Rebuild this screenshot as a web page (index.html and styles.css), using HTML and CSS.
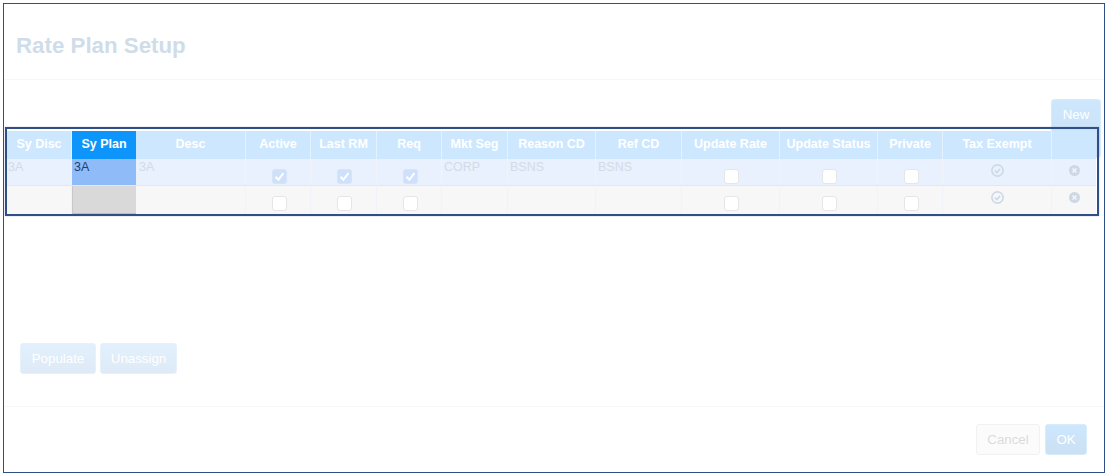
FILE: index.html
```html
<!DOCTYPE html>
<html lang="en">
<head>
<meta charset="utf-8">
<title>Rate Plan Setup</title>
<link rel="stylesheet" href="styles.css">
</head>
<body>
<div class="dialog">
  <header class="dialog-head"><h1 class="title">Rate Plan Setup</h1></header>
  <main class="dialog-body">
    <div class="toolbar"><button class="btn btn-new">New</button></div>
    <div class="grid">
      <div class="row row-head">
        <div class="th">Sy Disc</div>
        <div class="th th-active">Sy Plan</div>
        <div class="th">Desc</div>
        <div class="th">Active</div>
        <div class="th">Last RM</div>
        <div class="th">Req</div>
        <div class="th">Mkt Seg</div>
        <div class="th">Reason CD</div>
        <div class="th">Ref CD</div>
        <div class="th">Update Rate</div>
        <div class="th">Update Status</div>
        <div class="th">Private</div>
        <div class="th">Tax Exempt</div>
        <div class="th"></div>
      </div>
      <div class="row row-a">
        <div class="td td-first">3A</div>
        <div class="td td-plan-a">3A</div>
        <div class="td td-desc">3A</div>
        <div class="td td-box"><span class="check checked"><svg viewBox="0 0 15 15"><path d="M3.6 7.8l2.8 3 5-6.6" fill="none" stroke="#fff" stroke-width="2"/></svg></span></div>
        <div class="td td-box"><span class="check checked"><svg viewBox="0 0 15 15"><path d="M3.6 7.8l2.8 3 5-6.6" fill="none" stroke="#fff" stroke-width="2"/></svg></span></div>
        <div class="td td-box"><span class="check checked"><svg viewBox="0 0 15 15"><path d="M3.6 7.8l2.8 3 5-6.6" fill="none" stroke="#fff" stroke-width="2"/></svg></span></div>
        <div class="td">CORP</div>
        <div class="td">BSNS</div>
        <div class="td">BSNS</div>
        <div class="td td-box"><span class="check"></span></div>
        <div class="td td-box"><span class="check"></span></div>
        <div class="td td-box"><span class="check"></span></div>
        <div class="td td-icon"><svg class="ico-ok" viewBox="0 0 12 12"><circle cx="6" cy="6" r="5.2" fill="none" stroke="#cdd9e7" stroke-width="1.5"/><path d="M3.6 6.1l1.8 1.8 3-3.4" fill="none" stroke="#cdd9e7" stroke-width="1.4"/></svg></div>
        <div class="td td-icon"><svg class="ico-x" viewBox="0 0 10 10"><circle cx="5" cy="5" r="5" fill="#ced8e4"/><path d="M3.2 3.2l3.6 3.6M6.8 3.2l-3.6 3.6" stroke="#f2f5fa" stroke-width="1.4"/></svg></div>
      </div>
      <div class="row row-b">
        <div class="td td-first"></div>
        <div class="td td-plan-b"></div>
        <div class="td"></div>
        <div class="td td-box"><span class="check"></span></div>
        <div class="td td-box"><span class="check"></span></div>
        <div class="td td-box"><span class="check"></span></div>
        <div class="td"></div>
        <div class="td"></div>
        <div class="td"></div>
        <div class="td td-box"><span class="check"></span></div>
        <div class="td td-box"><span class="check"></span></div>
        <div class="td td-box"><span class="check"></span></div>
        <div class="td td-icon"><svg class="ico-ok" viewBox="0 0 12 12"><circle cx="6" cy="6" r="5.2" fill="none" stroke="#cdd9e7" stroke-width="1.5"/><path d="M3.6 6.1l1.8 1.8 3-3.4" fill="none" stroke="#cdd9e7" stroke-width="1.4"/></svg></div>
        <div class="td td-icon"><svg class="ico-x" viewBox="0 0 10 10"><circle cx="5" cy="5" r="5" fill="#ced8e4"/><path d="M3.2 3.2l3.6 3.6M6.8 3.2l-3.6 3.6" stroke="#f2f5fa" stroke-width="1.4"/></svg></div>
      </div>
      <div class="highlight"></div>
    </div>
    <div class="actions">
      <button class="btn btn-soft">Populate</button>
      <button class="btn btn-soft">Unassign</button>
    </div>
  </main>
  <footer class="dialog-foot">
    <button class="btn btn-cancel">Cancel</button>
    <button class="btn btn-ok">OK</button>
  </footer>
</div>
</body>
</html>
```
FILE: styles.css
```css
* { box-sizing: border-box; }
html, body { margin: 0; height: 100%; background: #fff; }
body { font-family: "Liberation Sans", Arial, sans-serif; font-size: 12.5px; padding: 3px 4px 3px 3px; overflow: hidden; }
.dialog { height: 470px; border: 1px solid #2f4f86; display: flex; flex-direction: column; background: #fff; }
.dialog-head { height: 76px; border-bottom: 1px solid #f6f7f8; display: flex; align-items: center; padding: 8px 0 0 12px; }
.title { margin: 0; font-size: 22.3px; font-weight: 700; line-height: 24px; color: #cfdde9; }
.dialog-body { height: 327px; border-bottom: 1px solid #f6f7f8; padding: 19px 0 0 3px; display: flex; flex-direction: column; }
.toolbar { display: flex; justify-content: flex-end; padding-right: 3px; margin-bottom: -27px; }
.btn { font-family: inherit; font-size: 13.3px; border-radius: 3px; padding: 0; color: #fff; }
.btn-new { width: 50px; height: 59px; padding-bottom: 29px; background: linear-gradient(#cde7fd, #cbe0f3); border: 1px solid #d8ebfb; }
.grid { position: relative; width: 1089px; }
.row { position: relative; display: grid; grid-template-columns: 65px 64px 110px 65px 66px 65px 66px 88px 86px 98px 98px 65px 109px 44px; }
.row-head { height: 27.5px; background: #cde8fe; }
.th { display: flex; align-items: center; justify-content: center; padding-bottom: 1px; font-weight: 700; color: #fff; border-right: 1px solid #e4f2fe; white-space: nowrap; }
.th:last-child { border-right: 0; }
.th-active { background: #0d95fb; border-right: 0; }
.row-a { height: 27.5px; background: #e8f1fd; border-bottom: 1px solid #e4e8ee; }
.row-b { height: 27.5px; background: #f7f7f7; }
.td { position: relative; color: #d3dbe5; line-height: 14px; padding: 1px 0 0 2px; border-right: 1px solid #f0f3f7; white-space: nowrap; }
.td:last-child { border-right: 0; }
.td-first { padding-left: 1px; }
.td-desc { padding-left: 3px; }
.td-plan-a { background: #8fbcf8; color: #1c3f70; border-right: 0; }
.td-plan-b { background: #d9d9d9; border-left: 1px solid #c8c8c8; border-bottom: 1px solid #bdbdbd; border-right: 0; }
.td-box { display: flex; justify-content: center; padding: 10px 0 0 2px; }
.check { display: block; width: 15px; height: 15px; background: #fff; border: 1px solid #e6e6e6; border-radius: 3px; }
.check.checked { background: #cfe0fb; border-color: #d7e4f8; }
.check svg { display: block; width: 15px; height: 15px; margin: -1px; }
.td-icon { display: flex; justify-content: center; padding: 5px 0 0 1px; }
.ico-ok { display: block; width: 13px; height: 13px; }
.ico-x { display: block; width: 11px; height: 11px; margin-top: 1px; }
.highlight { position: absolute; left: -2px; top: -4px; right: -3px; bottom: -2px; border: 2px solid #2f4f86; box-shadow: 0 0 1px #8ea3c6; pointer-events: none; }
.actions { display: flex; gap: 4px; margin-top: 129px; padding-left: 13px; }
.btn-soft { height: 31px; background: linear-gradient(#e2f0fd, #deeaf6); border: 1px solid #e6f1fc; }
.btn-soft:first-child { width: 76px; }
.btn-soft:last-child { width: 77px; }
.dialog-foot { flex: 1; display: flex; justify-content: flex-end; gap: 5px; padding: 17px 17px 0 0; }
.btn-cancel { width: 64px; height: 31px; color: #dcdcdc; background: #fbfbfb; border: 1px solid #f1f1f1; }
.btn-ok { width: 42px; height: 31px; background: linear-gradient(#cde7fd, #cbe0f3); border: 1px solid #d8ebfb; }
```
